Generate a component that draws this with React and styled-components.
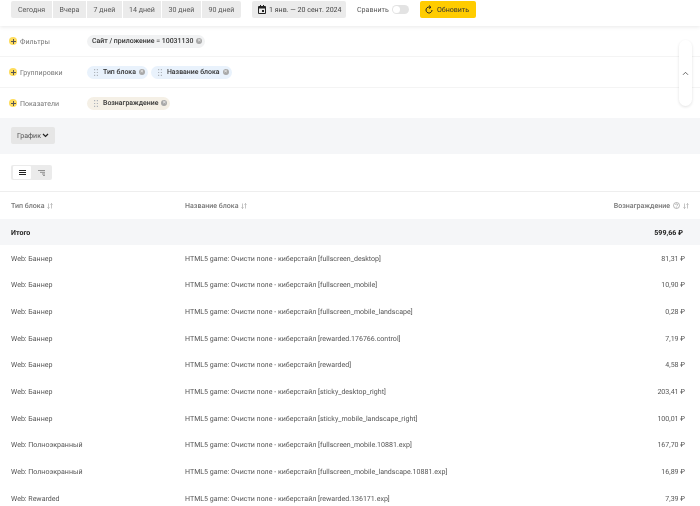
import React from "react";
import styled, { createGlobalStyle } from "styled-components";

const Global = createGlobalStyle`
  html, body { margin: 0; padding: 0; background: #fff; }
  body { font-family: Roboto, "Noto Sans", sans-serif; color: #1f1f1f; text-rendering: geometricPrecision; }
  #root { width: 700px; height: 506px; overflow: hidden; }
`;
const Page = styled.div`position: relative; width: 700px; height: 506px; overflow: hidden; font-size: 7.05px; will-change: transform;`;
const Toolbar = styled.div`
  height: 26px; box-sizing: border-box; padding-top: 1px; display: flex; align-items: flex-start; padding-left: 11px;
  box-shadow: 0 1px 4px rgba(0,0,0,.09); position: relative;
`;
const Segments = styled.div`display: flex; gap: 1px; height: 17px; border-radius: 2px; overflow: hidden;`;
const Segment = styled.div`
  width: ${p => p.$w}px; background: #ebebeb; display: flex; align-items: center; justify-content: center; color: #555;
`;
const DateButton = styled.div`
  margin-left: 11px; width: 94px; height: 17px; background: #ebebeb; border-radius: 2px; display: flex; align-items: center; gap: 3px; padding-left: 6px; box-sizing: border-box; color: #444; white-space: nowrap;
  svg { flex: none; }
`;
const CompareLabel = styled.span`margin-left: 11px; line-height: 17px; width: 35px; color: #555;`;
const Toggle = styled.div`
  width: 17px; height: 9px; margin-top: 4px; background: #e3e3e3; border-radius: 5px; position: relative;
  &::after { content: ""; position: absolute; left: 1px; top: 1px; width: 7px; height: 7px; background: #fff; border-radius: 50%; }
`;
const UpdateButton = styled.div`
  margin-left: 11px; width: 56px; height: 17px; background: #fc0; border-radius: 2px; display: flex; align-items: center; gap: 4px; padding-left: 5px; box-sizing: border-box; color: #333; white-space: nowrap;
`;
const ConfigRow = styled.div`
  height: ${p => p.$h}px; box-sizing: border-box; display: flex; align-items: center; padding-left: 9px;
  border-bottom: ${p => p.$last ? "none" : "1px solid #f4f4f4"};
`;
const Plus = styled.span`
  width: 8px; height: 8px; border-radius: 50%; background: #fedc5c; position: relative; flex: none;
  &::before { content: ""; position: absolute; left: 1.5px; top: 3.5px; width: 5px; height: 1px; background: #555; }
  &::after { content: ""; position: absolute; left: 3.5px; top: 1.5px; width: 1px; height: 5px; background: #555; }
`;
const ConfigLabel = styled.span`margin-left: 3px; width: 67px; color: #777;`;
const Chips = styled.div`display: flex; gap: 3px;`;
const Chip = styled.div`
  height: 13px; border-radius: 6.5px; background: ${p => p.$bg}; display: flex; align-items: center; padding: 0 3px 0 ${p => p.$pl}px; font-weight: 500; color: #333; white-space: nowrap; font-size: 6.95px;
`;
const Close = styled.span`
  width: 6px; height: 6px; border-radius: 50%; background: #a8a8a8; margin-left: 3px; position: relative; flex: none;
  &::after { content: "×"; position: absolute; left: 0; right: 0; top: -1.5px; text-align: center; color: #eee; font-size: 6px; line-height: 8px; }
`;
const ChartBand = styled.div`height: 36px; background: #f5f6f8; box-sizing: border-box; padding: 9px 0 0 11px;`;
const ChartButton = styled.div`
  width: 44px; height: 17px; border-radius: 2px; background: #e6e6e6; display: flex; align-items: center; justify-content: center; gap: 1px; color: #555;
`;
const ModeBand = styled.div`height: 38px; box-sizing: border-box; padding: 11px 0 0 11px; border-bottom: 1px solid #eee;`;
const ModeGroup = styled.div`
  width: 41px; height: 15px; box-sizing: border-box; border-radius: 2px; background: #ebebeb; padding: 1px; display: flex; align-items: stretch;
`;
const ModeItem = styled.div`
  width: 18px; margin-left: ${p => p.$ml || 1}px; background: ${p => p.$on ? "#fff" : "transparent"}; border-radius: 1px; display: flex; align-items: center; justify-content: center;
`;
const Grid = styled.div`display: grid; grid-template-columns: 174px 1fr 120px;`;
const HeaderCell = styled.div`
  height: 27px; box-sizing: border-box; display: flex; align-items: center; color: #777; font-weight: 500; gap: 3px;
  padding-left: 11px; padding-right: ${p => p.$right ? 11 : 0}px; justify-content: ${p => p.$right ? "flex-end" : "flex-start"};
`;
const TotalCell = styled.div`
  height: 26px; background: #f5f6f8; display: flex; align-items: center; font-weight: 700; color: #222;
  padding-left: 11px; padding-right: ${p => p.$right ? 17 : 0}px; justify-content: ${p => p.$right ? "flex-end" : "flex-start"};
`;
const Cell = styled.div`
  height: 26.65px; display: flex; align-items: center; color: #555; white-space: nowrap;
  padding-left: 11px; padding-right: ${p => p.$right ? 15 : 0}px; justify-content: ${p => p.$right ? "flex-end" : "flex-start"};
`;
const SideButton = styled.div`
  position: absolute; left: 679px; top: 40px; width: 13px; height: 66px; border-radius: 7px; background: #fff; box-shadow: 0 1px 3px rgba(0,0,0,.12);
  display: flex; align-items: center; justify-content: center;
`;

const Sort = () => (
  <svg width="6" height="6" viewBox="0 0 6 6" fill="none" stroke="#aaa" strokeWidth=".7">
    <path d="M1.5 .5v5M.5 4.3l1 1.2 1-1.2M4.5 5.5v-5M3.5 1.7l1-1.2 1 1.2" />
  </svg>
);
const Grip = () => (
  <svg width="4" height="7" viewBox="0 0 4 7" fill="#aeb4bb" style={{ marginRight: 5, flex: "none" }}>
    <path d="M0 0h1.2v1.2H0zM2.8 0H4v1.2H2.8zM0 2.9h1.2v1.2H0zM2.8 2.9H4v1.2H2.8zM0 5.8h1.2V7H0zM2.8 5.8H4V7H2.8z" />
  </svg>
);
const rows = [
  ["Web: Баннер", "fullscreen_desktop", "81,31 ₽"],
  ["Web: Баннер", "fullscreen_mobile", "10,90 ₽"],
  ["Web: Баннер", "fullscreen_mobile_landscape", "0,28 ₽"],
  ["Web: Баннер", "rewarded.176766.control", "7,19 ₽"],
  ["Web: Баннер", "rewarded", "4,58 ₽"],
  ["Web: Баннер", "sticky_desktop_right", "203,41 ₽"],
  ["Web: Баннер", "sticky_mobile_landscape_right", "100,01 ₽"],
  ["Web: Полноэкранный", "fullscreen_mobile.10881.exp", "167,70 ₽"],
  ["Web: Полноэкранный", "fullscreen_mobile_landscape.10881.exp", "16,89 ₽"],
  ["Web: Rewarded", "rewarded.136171.exp", "7,39 ₽"],
];
const segments = [["Сегодня", 41], ["Вчера", 33], ["7 дней", 35], ["14 дней", 38], ["30 дней", 39], ["90 дней", 39]];

export default function App() {
  return (
    <Page>
      <Global />
      <Toolbar>
        <Segments>{segments.map(([t, w]) => <Segment key={t} $w={w}>{t}</Segment>)}</Segments>
        <DateButton>
          <svg width="8" height="9" viewBox="0 0 8 9"><path d="M1 1h1V0h1v1h2V0h1v1h1a1 1 0 0 1 1 1v6a1 1 0 0 1-1 1H1a1 1 0 0 1-1-1V2a1 1 0 0 1 1-1zm0 2.5V8h6V3.5zM4 5h2v2H4z" fill="#222" fillRule="evenodd" /></svg>
          1 янв. — 20 сент. 2024
        </DateButton>
        <CompareLabel>Сравнить</CompareLabel>
        <Toggle />
        <UpdateButton>
          <svg width="8" height="9" viewBox="0 0 8 9" fill="none" stroke="#222" strokeWidth="1"><path d="M5.8 2.6A3 3 0 1 0 7 5" /><path d="M4.2 .6l1.8 1.8-2 1" /></svg>
          Обновить
        </UpdateButton>
      </Toolbar>
      <ConfigRow $h={31}>
        <Plus /><ConfigLabel>Фильтры</ConfigLabel>
        <Chips><Chip $bg="#f1f2f3" $pl={5}>Сайт / приложение = 10031130<Close /></Chip></Chips>
      </ConfigRow>
      <ConfigRow $h={31}>
        <Plus /><ConfigLabel>Группировки</ConfigLabel>
        <Chips>
          <Chip $bg="#e9f2fc" $pl={7}><Grip />Тип блока<Close /></Chip>
          <Chip $bg="#e9f2fc" $pl={7}><Grip />Название блока<Close /></Chip>
        </Chips>
      </ConfigRow>
      <ConfigRow $h={30} $last>
        <Plus /><ConfigLabel>Показатели</ConfigLabel>
        <Chips><Chip $bg="#f5f0e6" $pl={7}><Grip />Вознаграждение<Close /></Chip></Chips>
      </ConfigRow>
      <ChartBand>
        <ChartButton>График
          <svg width="7" height="5" viewBox="0 0 7 5" fill="none" stroke="#222" strokeWidth="1.2"><path d="M1 1l2.5 2.5L6 1" /></svg>
        </ChartButton>
      </ChartBand>
      <ModeBand>
        <ModeGroup>
          <ModeItem $on $ml={1}>
            <svg width="7" height="5" viewBox="0 0 7 5" stroke="#222" strokeWidth="1"><path d="M0 .5h7M0 2.5h7M0 4.5h7" /></svg>
          </ModeItem>
          <ModeItem>
            <svg width="7" height="6" viewBox="0 0 7 6" stroke="#777" strokeWidth=".8"><path d="M0 .5h7M2 2.3h5M4 4h3M5 5.6h2" /></svg>
          </ModeItem>
        </ModeGroup>
      </ModeBand>
      <Grid>
        <HeaderCell>Тип блока <Sort /></HeaderCell>
        <HeaderCell>Название блока <Sort /></HeaderCell>
        <HeaderCell $right>Вознаграждение
          <svg width="7" height="7" viewBox="0 0 7 7" fill="none" stroke="#888" strokeWidth=".6"><circle cx="3.5" cy="3.5" r="3" /><path d="M2.5 2.8a1 1 0 1 1 1.4 1L3.5 4.4M3.5 5v.6" /></svg>
          <Sort />
        </HeaderCell>
        <TotalCell>Итого</TotalCell>
        <TotalCell />
        <TotalCell $right>599,66 ₽</TotalCell>
        {rows.map(([a, b, c]) => (
          <React.Fragment key={b}>
            <Cell>{a}</Cell>
            <Cell>HTML5 game: Очисти поле - киберстайл [{b}]</Cell>
            <Cell $right>{c}</Cell>
          </React.Fragment>
        ))}
      </Grid>
      <SideButton>
        <svg width="7" height="5" viewBox="0 0 7 5" fill="none" stroke="#444" strokeWidth=".8"><path d="M1 3.8l2.5-2.5L6 3.8" /></svg>
      </SideButton>
    </Page>
  );
}
